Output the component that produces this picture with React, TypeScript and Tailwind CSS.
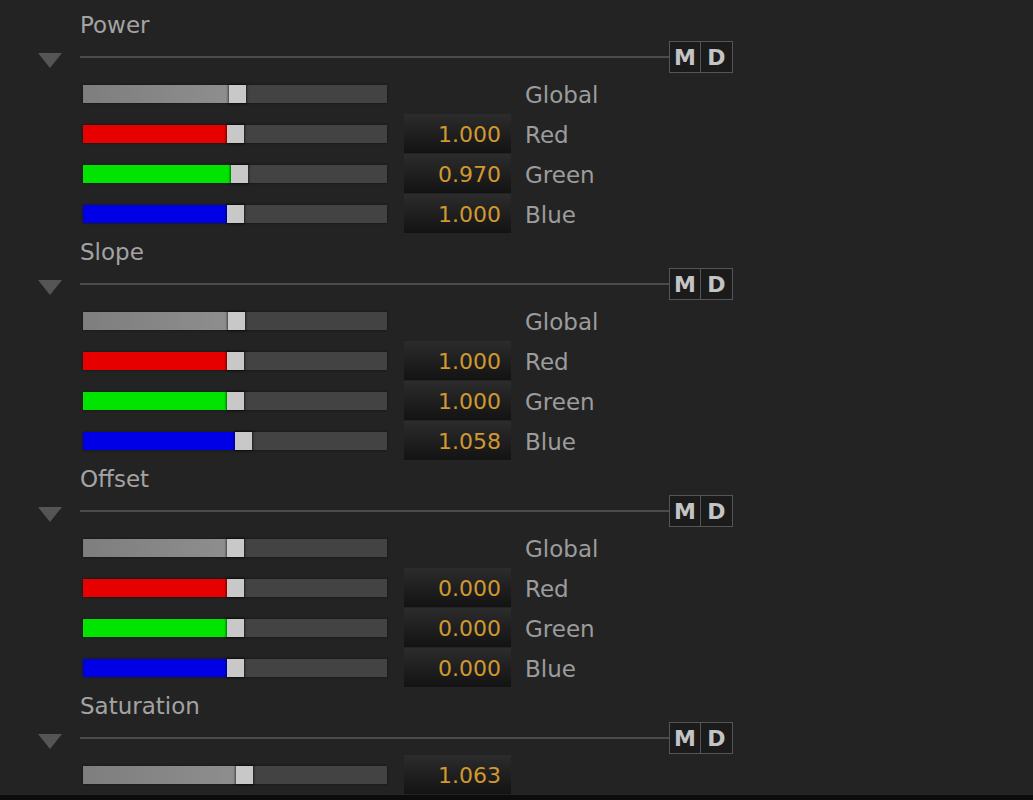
import React from 'react';

type Row = {
  label?: string;
  color: string;
  pos: number; // thumb left edge, px from track start
  value?: string;
};

type Section = {
  title: string;
  rows: Row[];
};

const FILL: Record<string, string> = {
  global: 'bg-gradient-to-r from-[#7e7e7e] to-[#8e8e8e]',
  red: 'bg-[#e60000]',
  green: 'bg-[#00e400]',
  blue: 'bg-[#0000e6]',
};

const SECTIONS: Section[] = [
  {
    title: 'Power',
    rows: [
      { label: 'Global', color: 'global', pos: 146 },
      { label: 'Red', color: 'red', pos: 144, value: '1.000' },
      { label: 'Green', color: 'green', pos: 148, value: '0.970' },
      { label: 'Blue', color: 'blue', pos: 144, value: '1.000' },
    ],
  },
  {
    title: 'Slope',
    rows: [
      { label: 'Global', color: 'global', pos: 145 },
      { label: 'Red', color: 'red', pos: 144, value: '1.000' },
      { label: 'Green', color: 'green', pos: 144, value: '1.000' },
      { label: 'Blue', color: 'blue', pos: 152, value: '1.058' },
    ],
  },
  {
    title: 'Offset',
    rows: [
      { label: 'Global', color: 'global', pos: 144 },
      { label: 'Red', color: 'red', pos: 144, value: '0.000' },
      { label: 'Green', color: 'green', pos: 144, value: '0.000' },
      { label: 'Blue', color: 'blue', pos: 144, value: '0.000' },
    ],
  },
  {
    title: 'Saturation',
    rows: [{ color: 'global', pos: 153, value: '1.063' }],
  },
];

function Slider({ color, pos }: { color: string; pos: number }) {
  return (
    <div className="relative w-[304px] h-[18px] bg-[#434343] shadow-[0_0_2px_rgba(0,0,0,0.6)]">
      <div className={`absolute left-0 top-0 h-full ${FILL[color]}`} style={{ width: pos }} />
      <div
        className="absolute top-0 h-full w-[17px] bg-[#c8c8c8] shadow-[0_0_2px_1px_rgba(0,0,0,0.55)]"
        style={{ left: pos }}
      />
    </div>
  );
}

function ValueBox({ value }: { value?: string }) {
  if (!value) return <div className="w-[107px] h-[39px]" />;
  return (
    <div className="w-[107px] h-[39px] bg-gradient-to-b from-[#2c2c2c] to-[#131313] flex items-center justify-end pr-[10px] pt-[1px] text-[22px] text-[#d1982f]">
      {value}
    </div>
  );
}

function SectionHeader() {
  return (
    <div className="flex items-center h-[32px]">
      <div className="w-[80px] pl-[38px] pt-[6px] flex">
        <svg width="24" height="15" viewBox="0 0 24 15">
          <polygon points="0,0 24,0 12,15" fill="#555555" />
        </svg>
      </div>
      <div className="flex-1 h-[2px] bg-[#4b4b4b]" />
      <div className="flex h-[32px] border border-[#555] mr-[300px]">
        <div className="w-[31px] h-full flex items-center justify-center bg-[#1b1b1b] border-r border-[#555] text-[22px] font-bold text-[#c4c4c4]">
          M
        </div>
        <div className="w-[31px] h-full flex items-center justify-center bg-[#1b1b1b] text-[22px] font-bold text-[#c4c4c4]">
          D
        </div>
      </div>
    </div>
  );
}

export default function App() {
  return (
    <div
      className="w-[1033px] h-[800px] flex flex-col bg-[#232323] overflow-hidden"
      style={{ fontFamily: '"DejaVu Sans", Tahoma, sans-serif' }}
    >
      <div className="h-[795px] overflow-hidden pt-[8px]">
        {SECTIONS.map((s) => (
          <div key={s.title} className="h-[227px]">
            {/* タイトル */}
            <div className="h-[33px] flex items-center pl-[80px] pt-[2px] text-[23px] text-[#a3a3a3]">
              {s.title}
            </div>
            <SectionHeader />
            {s.rows.map((r, i) => (
              <div key={i} className="h-[40px] flex items-center pl-[83px] pt-[1px]">
                <Slider color={r.color} pos={r.pos} />
                <div className="ml-[17px]">
                  <ValueBox value={r.value} />
                </div>
                {r.label && (
                  <span className="ml-[14px] pt-[4px] text-[23px] text-[#9c9c9c]">{r.label}</span>
                )}
              </div>
            ))}
          </div>
        ))}
      </div>
      <div className="h-[5px] bg-[#0c0c0c]" />
    </div>
  );
}
